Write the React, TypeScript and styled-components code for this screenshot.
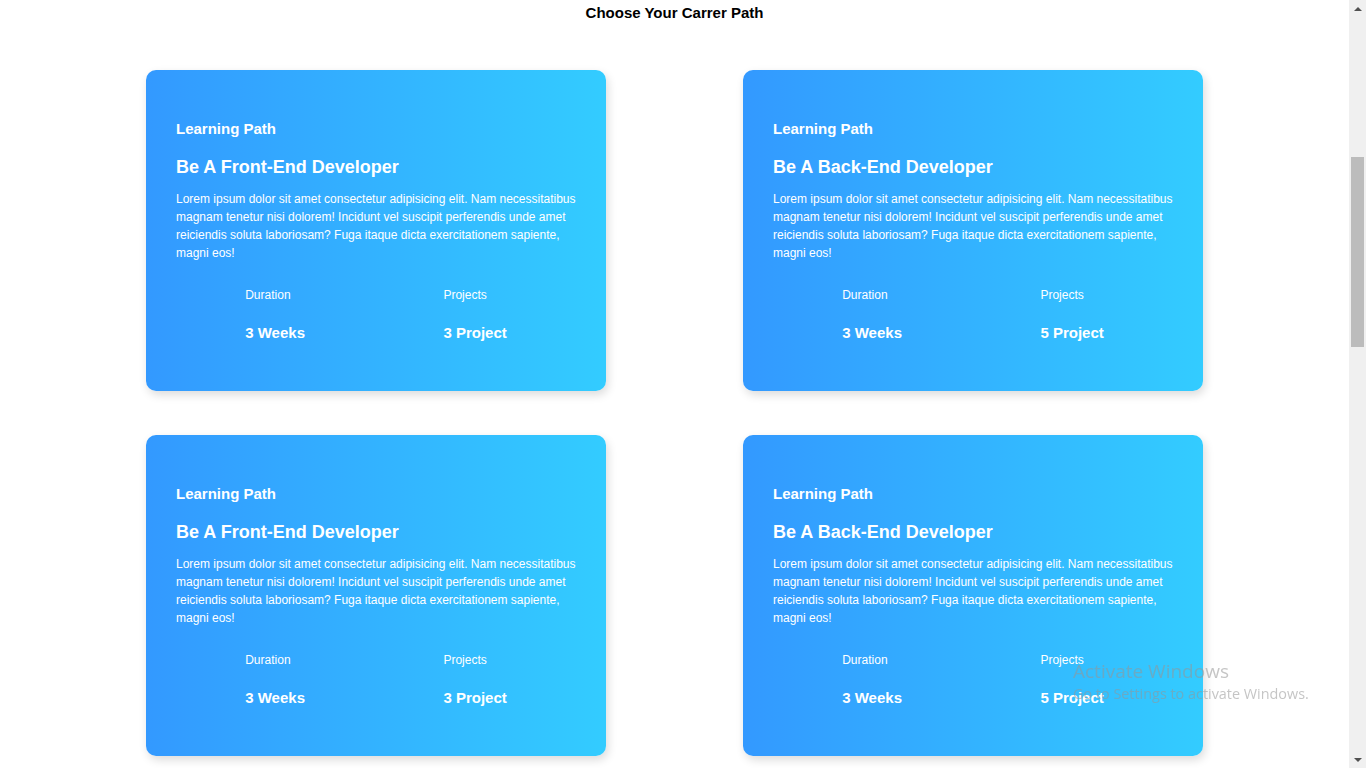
import React from "react";
import styled, { createGlobalStyle } from "styled-components";

const GlobalStyle = createGlobalStyle`
  html, body {
    margin: 0;
    padding: 0;
    background: #ffffff;
    font-family: "Liberation Sans", Arial, sans-serif;
  }
`;

const Page = styled.div`
  box-sizing: border-box;
  width: calc(100% - 17px);
  display: flex;
  flex-direction: column;
  align-items: center;
  padding-bottom: 12px;
`;

const Header = styled.h1`
  margin: 0;
  padding-top: 4px;
  font-size: 15px;
  line-height: 17px;
  font-weight: 700;
  color: #000;
  text-align: center;
`;

const Grid = styled.div`
  margin-top: 49px;
  display: grid;
  grid-template-columns: 460px 460px;
  column-gap: 137px;
  row-gap: 44px;
`;

const Card = styled.div`
  box-sizing: border-box;
  width: 460px;
  padding: 50px 30px 50px;
  border-radius: 10px;
  background: linear-gradient(to right, #3399ff, #33ccff);
  box-shadow: 2px 4px 10px rgba(0, 0, 0, 0.14);
  color: #fff;
  display: flex;
  flex-direction: column;
`;

const Tag = styled.div`
  font-size: 15px;
  line-height: 17px;
  font-weight: 700;
`;

const Title = styled.h2`
  margin: 20px 0 0;
  font-size: 18px;
  line-height: 21px;
  font-weight: 700;
`;

const Text = styled.p`
  margin: 12px 0 0;
  font-size: 12px;
  line-height: 18px;
`;

const Stats = styled.div`
  margin-top: 26px;
  display: flex;
  justify-content: space-around;
`;

const Stat = styled.div`
  display: flex;
  flex-direction: column;
  gap: 22px;
`;

const StatLabel = styled.span`
  font-size: 12px;
  line-height: 14px;
`;

const StatValue = styled.span`
  font-size: 15px;
  line-height: 17px;
  font-weight: 700;
`;

const Watermark = styled.div`
  position: fixed;
  left: 1073px;
  top: 659px;
  font-family: "Open Sans", "Noto Sans", sans-serif;
  color: rgba(150, 150, 150, 0.55);
  pointer-events: none;
`;

const WatermarkTitle = styled.div`
  font-size: 19px;
  line-height: 25px;
`;

const WatermarkSub = styled.div`
  font-size: 14.4px;
  line-height: 19px;
`;

const ScrollTrack = styled.div`
  position: fixed;
  top: 0;
  right: 0;
  width: 17px;
  height: 100vh;
  background: #f0f0f0;
  display: flex;
  flex-direction: column;
  align-items: center;
`;

const Arrow = styled.div<{ $down?: boolean }>`
  height: 17px;
  width: 17px;
  display: flex;
  align-items: center;
  justify-content: center;
  &::before {
    content: "";
    width: 0;
    height: 0;
    border-left: 4px solid transparent;
    border-right: 4px solid transparent;
    ${(p) =>
      p.$down
        ? "border-top: 4px solid #505050;"
        : "border-bottom: 4px solid #505050;"}
  }
`;

const Rail = styled.div`
  flex: 1;
  width: 100%;
  position: relative;
`;

const Thumb = styled.div`
  position: absolute;
  top: 140px;
  left: 2px;
  width: 13px;
  height: 190px;
  background: #bcbcbc;
`;

const lorem =
  "Lorem ipsum dolor sit amet consectetur adipisicing elit. Nam necessitatibus magnam tenetur nisi dolorem! Incidunt vel suscipit perferendis unde amet reiciendis soluta laboriosam? Fuga itaque dicta exercitationem sapiente, magni eos!";

const paths = [
  { title: "Be A Front-End Developer", duration: "3 Weeks", projects: "3 Project" },
  { title: "Be A Back-End Developer", duration: "3 Weeks", projects: "5 Project" },
  { title: "Be A Front-End Developer", duration: "3 Weeks", projects: "3 Project" },
  { title: "Be A Back-End Developer", duration: "3 Weeks", projects: "5 Project" },
];

export default function App() {
  return (
    <>
      <GlobalStyle />
      <Page>
        <Header>Choose Your Carrer Path</Header>
        <Grid>
          {paths.map((p, i) => (
            <Card key={i}>
              <Tag>Learning Path</Tag>
              <Title>{p.title}</Title>
              <Text>{lorem}</Text>
              <Stats>
                <Stat>
                  <StatLabel>Duration</StatLabel>
                  <StatValue>{p.duration}</StatValue>
                </Stat>
                <Stat>
                  <StatLabel>Projects</StatLabel>
                  <StatValue>{p.projects}</StatValue>
                </Stat>
              </Stats>
            </Card>
          ))}
        </Grid>
      </Page>
      <Watermark>
        <WatermarkTitle>Activate Windows</WatermarkTitle>
        <WatermarkSub>Go to Settings to activate Windows.</WatermarkSub>
      </Watermark>
      <ScrollTrack>
        <Arrow />
        <Rail>
          <Thumb />
        </Rail>
        <Arrow $down />
      </ScrollTrack>
    </>
  );
}
